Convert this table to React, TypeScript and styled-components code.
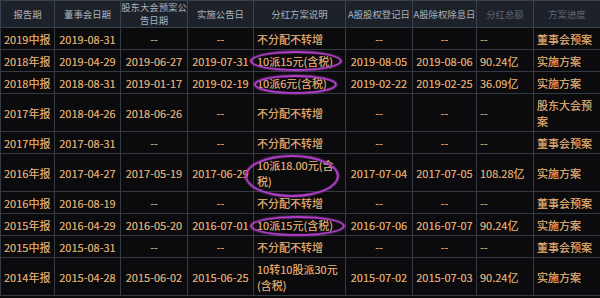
import React from 'react'
import styled, { createGlobalStyle } from 'styled-components'

const GlobalStyle = createGlobalStyle`
  html, body {
    margin: 0;
    padding: 0;
    background: #0b0b0d;
  }
  body {
    font-family: "Noto Sans CJK SC", "Noto Sans", sans-serif;
  }
`

const Wrapper = styled.div`
  width: 600px;
  height: 298px;
  overflow: hidden;
  background: #0b0b0d;
`

const Table = styled.table`
  width: 600px;
  table-layout: fixed;
  border-collapse: collapse;
  font-size: 11px;
  color: #dca66e;
`

const HeadRow = styled.tr`
  height: 26px;
`

const HeadCell = styled.th<{ $faded?: boolean }>`
  padding: 0;
  background: #1d222a;
  border: 1px solid #3a424e;
  font-size: 9.4px;
  font-weight: 400;
  line-height: 13px;
  color: ${(p) => (p.$faded ? '#5d6774' : '#a9b2bd')};
  text-align: center;
  vertical-align: middle;
  white-space: normal;
`

const Clip = styled.div`
  height: 26px;
  overflow: hidden;
  display: flex;
  align-items: center;
  justify-content: center;
`

const Row = styled.tr<{ $tall?: boolean }>`
  height: ${(p) => (p.$tall ? '38px' : '22px')};
`

const Cell = styled.td<{ $align?: 'left' | 'center' }>`
  position: relative;
  padding: 0 3px;
  border: 1px solid #343b46;
  line-height: 16px;
  text-align: ${(p) => p.$align ?? 'center'};
  vertical-align: middle;
  white-space: normal;
  word-break: break-all;
  text-shadow: 0 0 0.5px rgba(220, 166, 110, 0.8);
`

const Mark = styled.span<{ $l: number; $t: number; $w: number; $h: number }>`
  position: absolute;
  left: ${(p) => p.$l}px;
  top: ${(p) => p.$t}px;
  width: ${(p) => p.$w}px;
  height: ${(p) => p.$h}px;
  border: 2px solid #b03cc8;
  border-radius: 50%;
  box-shadow: 0 0 2px #c25ad6, inset 0 0 1px #c25ad6;
  pointer-events: none;
`

type Ring = { l: number; t: number; w: number; h: number }

type Item = {
  period: string
  board: string
  meeting: string
  publish: string
  plan: string
  ring?: Ring
  record: string
  exDate: string
  total: string
  stage: string
  tall?: boolean
}

const rows: Item[] = [
  { period: '2019中报', board: '2019-08-31', meeting: '--', publish: '--', plan: '不分配不转增', record: '--', exDate: '--', total: '--', stage: '董事会预案' },
  { period: '2018年报', board: '2019-04-29', meeting: '2019-06-27', publish: '2019-07-31', plan: '10派15元(含税)', ring: { l: -4, t: 1, w: 88, h: 16 }, record: '2019-08-05', exDate: '2019-08-06', total: '90.24亿', stage: '实施方案' },
  { period: '2018中报', board: '2018-08-31', meeting: '2019-01-17', publish: '2019-02-19', plan: '10派6元(含税)', ring: { l: 0, t: 3, w: 79, h: 15 }, record: '2019-02-22', exDate: '2019-02-25', total: '36.09亿', stage: '实施方案' },
  { period: '2017年报', board: '2018-04-26', meeting: '2018-06-26', publish: '--', plan: '不分配不转增', record: '--', exDate: '--', total: '--', stage: '股东大会预案', tall: true },
  { period: '2017中报', board: '2017-08-31', meeting: '--', publish: '--', plan: '不分配不转增', record: '--', exDate: '--', total: '--', stage: '董事会预案' },
  { period: '2016年报', board: '2017-04-27', meeting: '2017-05-19', publish: '2017-06-29', plan: '10派18.00元(含税)', ring: { l: -9, t: 1, w: 90, h: 38 }, record: '2017-07-04', exDate: '2017-07-05', total: '108.28亿', stage: '实施方案', tall: true },
  { period: '2016中报', board: '2016-08-19', meeting: '--', publish: '--', plan: '不分配不转增', record: '--', exDate: '--', total: '--', stage: '董事会预案' },
  { period: '2015年报', board: '2016-04-29', meeting: '2016-05-20', publish: '2016-07-01', plan: '10派15元(含税)', ring: { l: -4, t: 2, w: 91, h: 16 }, record: '2016-07-06', exDate: '2016-07-07', total: '90.24亿', stage: '实施方案' },
  { period: '2015中报', board: '2015-08-31', meeting: '--', publish: '--', plan: '不分配不转增', record: '--', exDate: '--', total: '--', stage: '董事会预案' },
  { period: '2014年报', board: '2015-04-28', meeting: '2015-06-02', publish: '2015-06-25', plan: '10转10股派30元(含税)', record: '2015-07-02', exDate: '2015-07-03', total: '90.24亿', stage: '实施方案', tall: true }
]

const widths = [54, 66, 67, 66, 92, 67, 64, 57, 67]

const headers: { label: string; faded?: boolean }[] = [
  { label: '报告期' },
  { label: '董事会日期' },
  { label: '股东大会预案公告日期' },
  { label: '实施公告日' },
  { label: '分红方案说明' },
  { label: 'A股股权登记日' },
  { label: 'A股除权除息日' },
  { label: '分红总额', faded: true },
  { label: '方案进度', faded: true }
]

const App = () => {
  return (
    <Wrapper>
      <GlobalStyle />
      <Table>
        <colgroup>
          {widths.map((w, i) => (
            <col key={`col-${i}`} style={{ width: w }} />
          ))}
        </colgroup>
        <thead>
          <HeadRow>
            {headers.map((h) => (
              <HeadCell key={h.label} $faded={h.faded}>
                <Clip>{h.label}</Clip>
              </HeadCell>
            ))}
          </HeadRow>
        </thead>
        <tbody>
          {rows.map((r) => (
            <Row key={r.period} $tall={r.tall}>
              <Cell $align='left'>{r.period}</Cell>
              <Cell>{r.board}</Cell>
              <Cell>{r.meeting}</Cell>
              <Cell>{r.publish}</Cell>
              <Cell $align='left'>
                {r.plan}
                {r.ring && <Mark $l={r.ring.l} $t={r.ring.t} $w={r.ring.w} $h={r.ring.h} />}
              </Cell>
              <Cell>{r.record}</Cell>
              <Cell>{r.exDate}</Cell>
              <Cell $align='left'>{r.total}</Cell>
              <Cell $align='left'>{r.stage}</Cell>
            </Row>
          ))}
        </tbody>
      </Table>
    </Wrapper>
  )
}

export default App
